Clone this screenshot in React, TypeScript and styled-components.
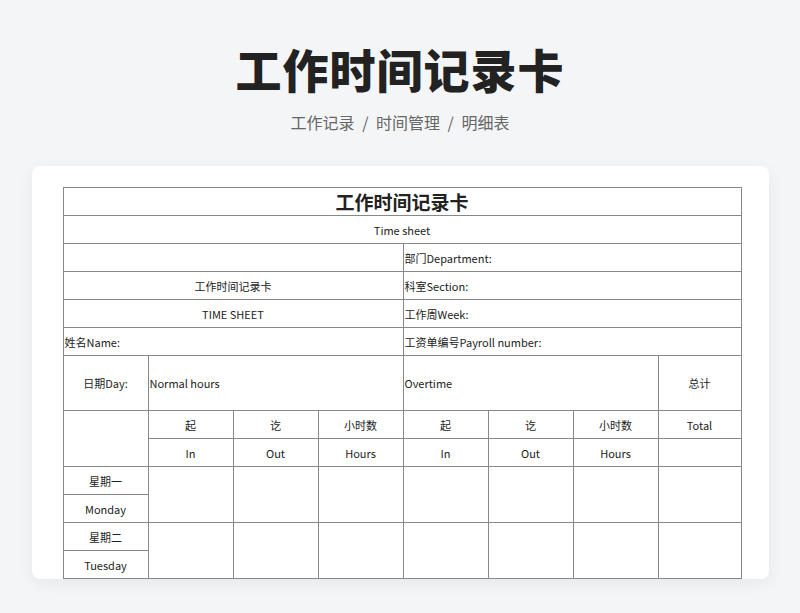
import React from 'react';
import styled, { createGlobalStyle } from 'styled-components';

const Global = createGlobalStyle`
  body { margin: 0; background: #f4f5f7; font-family: "Noto Sans CJK SC", "Noto Sans", sans-serif; }
`;

const Page = styled.div`
  height: 613px;
  overflow: hidden;
  display: flex;
  flex-direction: column;
  align-items: center;
`;

const Title = styled.h1`
  margin: 37px 0 0;
  font-size: 46px;
  line-height: 62px;
  font-weight: 900;
  color: #222;
  letter-spacing: 1px;
`;

const Crumbs = styled.div`
  margin-top: 11px;
  font-size: 16px;
  line-height: 24px;
  color: #666;
  word-spacing: 4px;
`;

const Card = styled.div`
  margin-top: 32px;
  width: 737px;
  height: 413px;
  box-sizing: border-box;
  padding: 21px 0 0 31px;
  background: #fff;
  border-radius: 8px;
  box-shadow: 0 4px 16px rgba(0, 0, 0, 0.06);
  overflow: hidden;
`;

const Sheet = styled.table`
  border-collapse: collapse;
  table-layout: fixed;
  width: 678px;
  font-size: 11px;
  color: #222;
  td {
    border: 1px solid #888;
    height: 27px;
    padding: 0 1px;
    text-align: center;
    white-space: nowrap;
  }
`;

const Cell = styled.td<{ $left?: boolean; $big?: boolean; $tall?: boolean }>`
  && {
    text-align: ${p => (p.$left ? 'left' : 'center')};
    font-size: ${p => (p.$big ? '19px' : '11px')};
    font-weight: ${p => (p.$big ? 700 : 400)};
    height: ${p => (p.$tall ? '54px' : '27px')};
  }
`;

const widths = [85, 85, 85, 85, 85, 85, 85, 83];

export default function App() {
  const days = [['星期一', 'Monday'], ['星期二', 'Tuesday']];
  return (
    <Page>
      <Global />
      <Title>工作时间记录卡</Title>
      <Crumbs>工作记录 / 时间管理 / 明细表</Crumbs>
      <Card>
        <Sheet>
          <colgroup>
            {widths.map((w, i) => <col key={i} style={{ width: w }} />)}
          </colgroup>
          <tbody>
            <tr><Cell colSpan={8} $big>工作时间记录卡</Cell></tr>
            <tr><Cell colSpan={8}>Time sheet</Cell></tr>
            <tr><Cell colSpan={4} /><Cell colSpan={4} $left>部门Department:</Cell></tr>
            <tr><Cell colSpan={4}>工作时间记录卡</Cell><Cell colSpan={4} $left>科室Section:</Cell></tr>
            <tr><Cell colSpan={4}>TIME SHEET</Cell><Cell colSpan={4} $left>工作周Week:</Cell></tr>
            <tr><Cell colSpan={4} $left>姓名Name:</Cell><Cell colSpan={4} $left>工资单编号Payroll number:</Cell></tr>
            <tr>
              <Cell $tall>日期Day:</Cell>
              <Cell colSpan={3} $left $tall>Normal hours</Cell>
              <Cell colSpan={3} $left $tall>Overtime</Cell>
              <Cell $tall>总计</Cell>
            </tr>
            <tr>
              <Cell rowSpan={2} />
              <Cell>起</Cell><Cell>讫</Cell><Cell>小时数</Cell>
              <Cell>起</Cell><Cell>讫</Cell><Cell>小时数</Cell>
              <Cell>Total</Cell>
            </tr>
            <tr>
              <Cell>In</Cell><Cell>Out</Cell><Cell>Hours</Cell>
              <Cell>In</Cell><Cell>Out</Cell><Cell>Hours</Cell>
              <Cell />
            </tr>
            {days.map(([cn, en]) => (
              <React.Fragment key={en}>
                <tr>
                  <Cell>{cn}</Cell>
                  {widths.slice(1).map((_, i) => <Cell key={i} rowSpan={2} />)}
                </tr>
                <tr><Cell>{en}</Cell></tr>
              </React.Fragment>
            ))}
          </tbody>
        </Sheet>
      </Card>
    </Page>
  );
}
